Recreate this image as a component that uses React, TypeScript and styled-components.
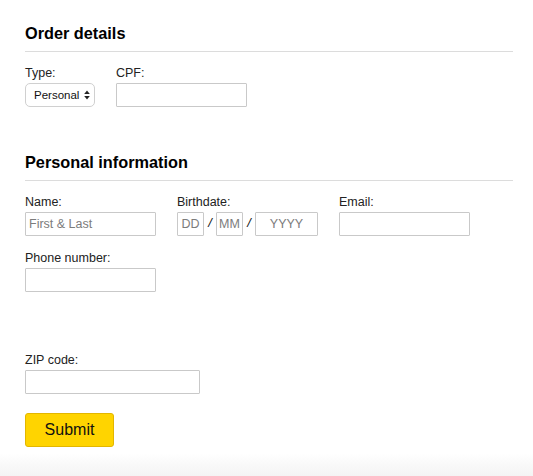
import React from "react";
import styled, { createGlobalStyle } from "styled-components";

const GlobalStyle = createGlobalStyle`
  html, body {
    margin: 0;
    padding: 0;
    background: #fff;
  }
  body {
    font-family: "Liberation Sans", Arial, Helvetica, sans-serif;
    color: #222;
  }
`;

const Page = styled.form`
  padding: 24px 20px 0 25px;
`;

const SectionTitle = styled.h2<{ $top?: number }>`
  margin: ${(p) => p.$top ?? 0}px 0 14px;
  padding-bottom: 9px;
  border-bottom: 1px solid #dcdcdc;
  font-size: 16.3px;
  line-height: 18px;
  font-weight: 700;
  color: #000;
`;

const FieldRow = styled.div`
  display: flex;
  flex-wrap: wrap;
  column-gap: 21px;
  row-gap: 15px;
`;

const Field = styled.div<{ $top?: number }>`
  display: flex;
  flex-direction: column;
  align-items: flex-start;
  margin-top: ${(p) => p.$top ?? 0}px;
`;

const Label = styled.label`
  display: block;
  font-size: 12.5px;
  line-height: 14px;
  margin-bottom: 3px;
  color: #222;
`;

const TextInput = styled.input<{ $width?: number; $center?: boolean; $tight?: boolean }>`
  box-sizing: border-box;
  width: ${(p) => p.$width ?? 131}px;
  height: 24px;
  margin: 0;
  padding: 0 ${(p) => (p.$tight ? 0 : 3)}px;
  border: 1px solid #c9c9c9;
  border-radius: 1px;
  background: #fff;
  font-family: inherit;
  font-size: 12.5px;
  color: #222;
  text-align: ${(p) => (p.$center ? "center" : "left")};
  outline: none;

  &::placeholder {
    color: #7c7c7c;
  }
`;

const SelectWrap = styled.div`
  position: relative;
  width: 70px;
  height: 24px;
`;

const Select = styled.select`
  box-sizing: border-box;
  appearance: none;
  -webkit-appearance: none;
  width: 70px;
  height: 24px;
  margin: 0;
  padding: 0 0 0 8px;
  border: 1px solid #d0d0d0;
  border-radius: 5px;
  background: #fff;
  font-family: inherit;
  font-size: 11.5px;
  color: #111;
  outline: none;
`;

const SelectArrows = styled.svg`
  position: absolute;
  right: 5px;
  top: 7px;
  pointer-events: none;
`;

const DateGroup = styled.div`
  display: flex;
  align-items: center;
`;

const Slash = styled.span`
  width: 12px;
  margin-top: -3px;
  text-align: center;
  font-size: 13px;
  font-style: italic;
  color: #111;
`;

const SubmitButton = styled.button`
  box-sizing: border-box;
  display: block;
  width: 89px;
  height: 34px;
  margin-top: 19px;
  padding: 0;
  border: 1px solid #e3b600;
  border-radius: 3px;
  background: #ffd400;
  font-family: inherit;
  font-size: 16px;
  color: #111;
  cursor: pointer;
`;

const BottomShade = styled.div`
  height: 29px;
  margin-top: 6px;
  background: linear-gradient(to bottom, #ffffff 0%, #f9f9f9 40%, #f1f1f1 100%);
`;

const App: React.FC = () => {
  return (
    <>
      <GlobalStyle />
      <Page onSubmit={(e) => e.preventDefault()}>
        <SectionTitle>Order details</SectionTitle>
        <FieldRow>
          <Field>
            <Label>Type:</Label>
            <SelectWrap>
              <Select defaultValue="personal">
                <option value="personal">Personal</option>
                <option value="business">Business</option>
              </Select>
              <SelectArrows width="6" height="10" viewBox="0 0 6 10">
                <path d="M3 0.5 L5.8 4 L0.2 4 Z" fill="#222" />
                <path d="M3 9.5 L5.8 6 L0.2 6 Z" fill="#222" />
              </SelectArrows>
            </SelectWrap>
          </Field>
          <Field>
            <Label>CPF:</Label>
            <TextInput $width={131} />
          </Field>
        </FieldRow>

        <SectionTitle $top={46}>Personal information</SectionTitle>
        <FieldRow>
          <Field>
            <Label>Name:</Label>
            <TextInput placeholder="First & Last" />
          </Field>
          <Field>
            <Label>Birthdate:</Label>
            <DateGroup>
              <TextInput $width={27} $center $tight placeholder="DD" />
              <Slash>/</Slash>
              <TextInput $width={27} $center $tight placeholder="MM" />
              <Slash>/</Slash>
              <TextInput $width={63} $center placeholder="YYYY" />
            </DateGroup>
          </Field>
          <Field>
            <Label>Email:</Label>
            <TextInput />
          </Field>
          <Field>
            <Label>Phone number:</Label>
            <TextInput />
          </Field>
        </FieldRow>

        <Field $top={61}>
          <Label>ZIP code:</Label>
          <TextInput $width={175} />
        </Field>

        <SubmitButton type="submit">Submit</SubmitButton>
      </Page>
      <BottomShade />
    </>
  );
};

export default App;
